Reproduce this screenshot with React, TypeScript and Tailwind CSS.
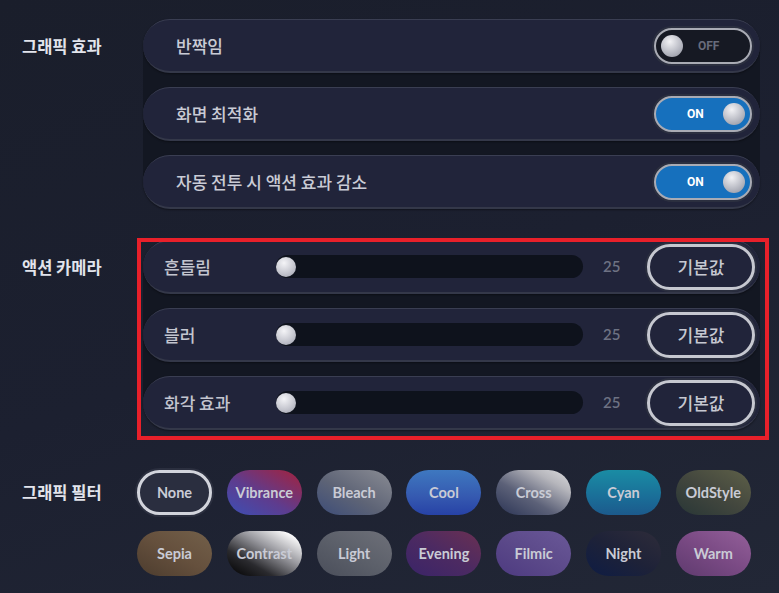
import React from "react";

const kr = "font-['Noto_Sans_CJK_KR','Noto_Sans',sans-serif]";

function Toggle({ on }: { on: boolean }) {
  if (on) {
    return (
      <div className="w-[98px] h-[36px] rounded-full border-2 border-[#a9abb4] bg-[#1670bd] shadow-[0_0_0_2px_#2b2f3f] flex items-center justify-end pr-[5px] relative">
        <span className="absolute left-[31px] top-1/2 -translate-y-1/2 text-[12px] font-bold text-white font-['Roboto',sans-serif]">ON</span>
        <div className="w-[22px] h-[22px] rounded-full bg-[radial-gradient(circle_at_40%_30%,#f2f2f5,#b4b6c0_60%,#8d8f9a)]" />
      </div>
    );
  }
  return (
    <div className="w-[98px] h-[36px] rounded-full border-2 border-[#a9abb4] bg-[#161923] shadow-[0_0_0_2px_#2b2f3f] flex items-center pl-[5px] relative">
      <div className="w-[22px] h-[22px] rounded-full bg-[radial-gradient(circle_at_40%_30%,#f2f2f5,#b4b6c0_60%,#8d8f9a)]" />
      <span className="absolute left-[42px] top-1/2 -translate-y-1/2 text-[12px] font-bold text-[#686c7c] font-['Roboto',sans-serif]">OFF</span>
    </div>
  );
}

function Row({ children }: { children: React.ReactNode }) {
  return (
    <div className="h-[54px] rounded-full bg-[#21243a] border-t border-t-[#3a3e52] border-b-2 border-b-[#343849] flex items-center shadow-[0_1px_2px_rgba(0,0,0,0.4)]">
      {children}
    </div>
  );
}

function ToggleRow({ label, on }: { label: string; on: boolean }) {
  return (
    <Row>
      <span className={`pl-[33px] flex-1 text-[17px] font-medium text-[#c9cbd5] ${kr}`}>{label}</span>
      <div className="pr-[8px]">
        <Toggle on={on} />
      </div>
    </Row>
  );
}

function SliderRow({ label }: { label: string }) {
  return (
    <Row>
      <span className={`pl-[21px] w-[133px] shrink-0 text-[17px] font-medium text-[#c3c5cf] ${kr}`}>{label}</span>
      <div className="w-[307px] h-[23px] rounded-full bg-[#0e121c] flex items-center">
        <div className="w-[20px] h-[20px] rounded-full bg-[radial-gradient(circle_at_40%_30%,#f4f4f7,#c2c3cc_60%,#9c9eaa)]" />
      </div>
      <span className="ml-[20px] w-[44px] text-[15px] font-semibold text-[#6e7283] font-['Lato',sans-serif]">25</span>
      <div className={`w-[108px] h-[46px] rounded-full border-[3px] border-[#c6c8d0] shadow-[0_0_0_2px_#2b2f3f] flex items-center justify-center text-[17px] font-medium text-[#c6c8d1] ${kr}`}>
        기본값
      </div>
    </Row>
  );
}

const filters: { name: string; cls: string }[] = [
  { name: "None", cls: "bg-[#2a2e3f] border-[3px] border-[#d2d4dc] shadow-[0_0_0_2px_#2b2f3f]" },
  { name: "Vibrance", cls: "bg-[linear-gradient(30deg,#3c4fb4_0%,#5e3c8e_45%,#a4223c_100%)]" },
  { name: "Bleach", cls: "bg-[linear-gradient(30deg,#3c4c78_0%,#5e6476_45%,#8a8c94_100%)]" },
  { name: "Cool", cls: "bg-[linear-gradient(180deg,#3e78c0_0%,#3559b0_60%,#2742a6_100%)]" },
  { name: "Cross", cls: "bg-[linear-gradient(30deg,#2a3354_0%,#5c6178_40%,#b6b6bc_75%,#dcdcdf_100%)]" },
  { name: "Cyan", cls: "bg-[linear-gradient(180deg,#1a8ca4_0%,#1a6e98_60%,#1c5a8c_100%)]" },
  { name: "OldStyle", cls: "bg-[linear-gradient(30deg,#283636_0%,#43473e_50%,#5e6048_100%)]" },
  { name: "Sepia", cls: "bg-[linear-gradient(30deg,#4c3c2e_0%,#65503d_50%,#73604a_100%)]" },
  { name: "Contrast", cls: "bg-[linear-gradient(30deg,#000000_0%,#2a2a2e_30%,#9a9aa0_60%,#ffffff_90%)]" },
  { name: "Light", cls: "bg-[linear-gradient(30deg,#4a4e5a_0%,#5c606a_50%,#6e7079_100%)]" },
  { name: "Evening", cls: "bg-[linear-gradient(30deg,#3a2468_0%,#4c2a62_50%,#6a3052_100%)]" },
  { name: "Filmic", cls: "bg-[linear-gradient(30deg,#4d3a80_0%,#5c4a8a_50%,#6a5898_100%)]" },
  { name: "Night", cls: "bg-[linear-gradient(30deg,#0e1c44_0%,#1e2238_50%,#2e2c3a_100%)]" },
  { name: "Warm", cls: "bg-[linear-gradient(30deg,#5e3a6e_0%,#7a4a84_50%,#94609a_100%)]" },
];

export default function App() {
  return (
    <div className="relative w-[779px] h-[593px] overflow-hidden bg-[linear-gradient(160deg,#1a1e2b_0%,#1c2030_50%,#222736_100%)]">
      <div className="pt-[19px] flex flex-col">
        {/* Section 1 */}
        <div className="flex">
          <div className={`w-[143px] shrink-0 pl-[22px] h-[54px] flex items-center text-[16.5px] font-bold text-[#e2e4ec] ${kr}`}>
            그래픽 효과
          </div>
          <div className="w-[617px] bg-[#131722] rounded-[27px] flex flex-col gap-[14px]">
            <ToggleRow label="반짝임" on={false} />
            <ToggleRow label="화면 최적화" on={true} />
            <ToggleRow label="자동 전투 시 액션 효과 감소" on={true} />
          </div>
        </div>

        {/* Section 2 */}
        <div className="flex mt-[31px]">
          <div className={`w-[143px] shrink-0 pl-[22px] h-[54px] flex items-center text-[16.5px] font-bold text-[#e2e4ec] ${kr}`}>
            액션 카메라
          </div>
          <div className="w-[617px] bg-[#131722] rounded-[27px] flex flex-col gap-[14px]">
            <SliderRow label="흔들림" />
            <SliderRow label="블러" />
            <SliderRow label="화각 효과" />
          </div>
        </div>

        {/* Section 3 */}
        <div className="flex mt-[40px]">
          <div className={`w-[137px] shrink-0 pl-[22px] h-[45px] flex items-center text-[16.5px] font-bold text-[#e2e4ec] ${kr}`}>
            그래픽 필터
          </div>
          <div className="grid grid-cols-[repeat(7,75px)] gap-x-[14.8px] gap-y-[16px]">
            {filters.map((f) => (
              <div
                key={f.name}
                className={`w-[75px] h-[45px] rounded-full flex items-center justify-center text-[14.5px] font-bold text-[#c9cbd5] font-['Lato',sans-serif] ${f.cls}`}
              >
                {f.name}
              </div>
            ))}
          </div>
        </div>
      </div>

      {/* annotation rectangle */}
      <div className="absolute left-[137px] top-[238px] w-[632px] h-[202px] border-4 border-[#e8202a] pointer-events-none" />
    </div>
  );
}
